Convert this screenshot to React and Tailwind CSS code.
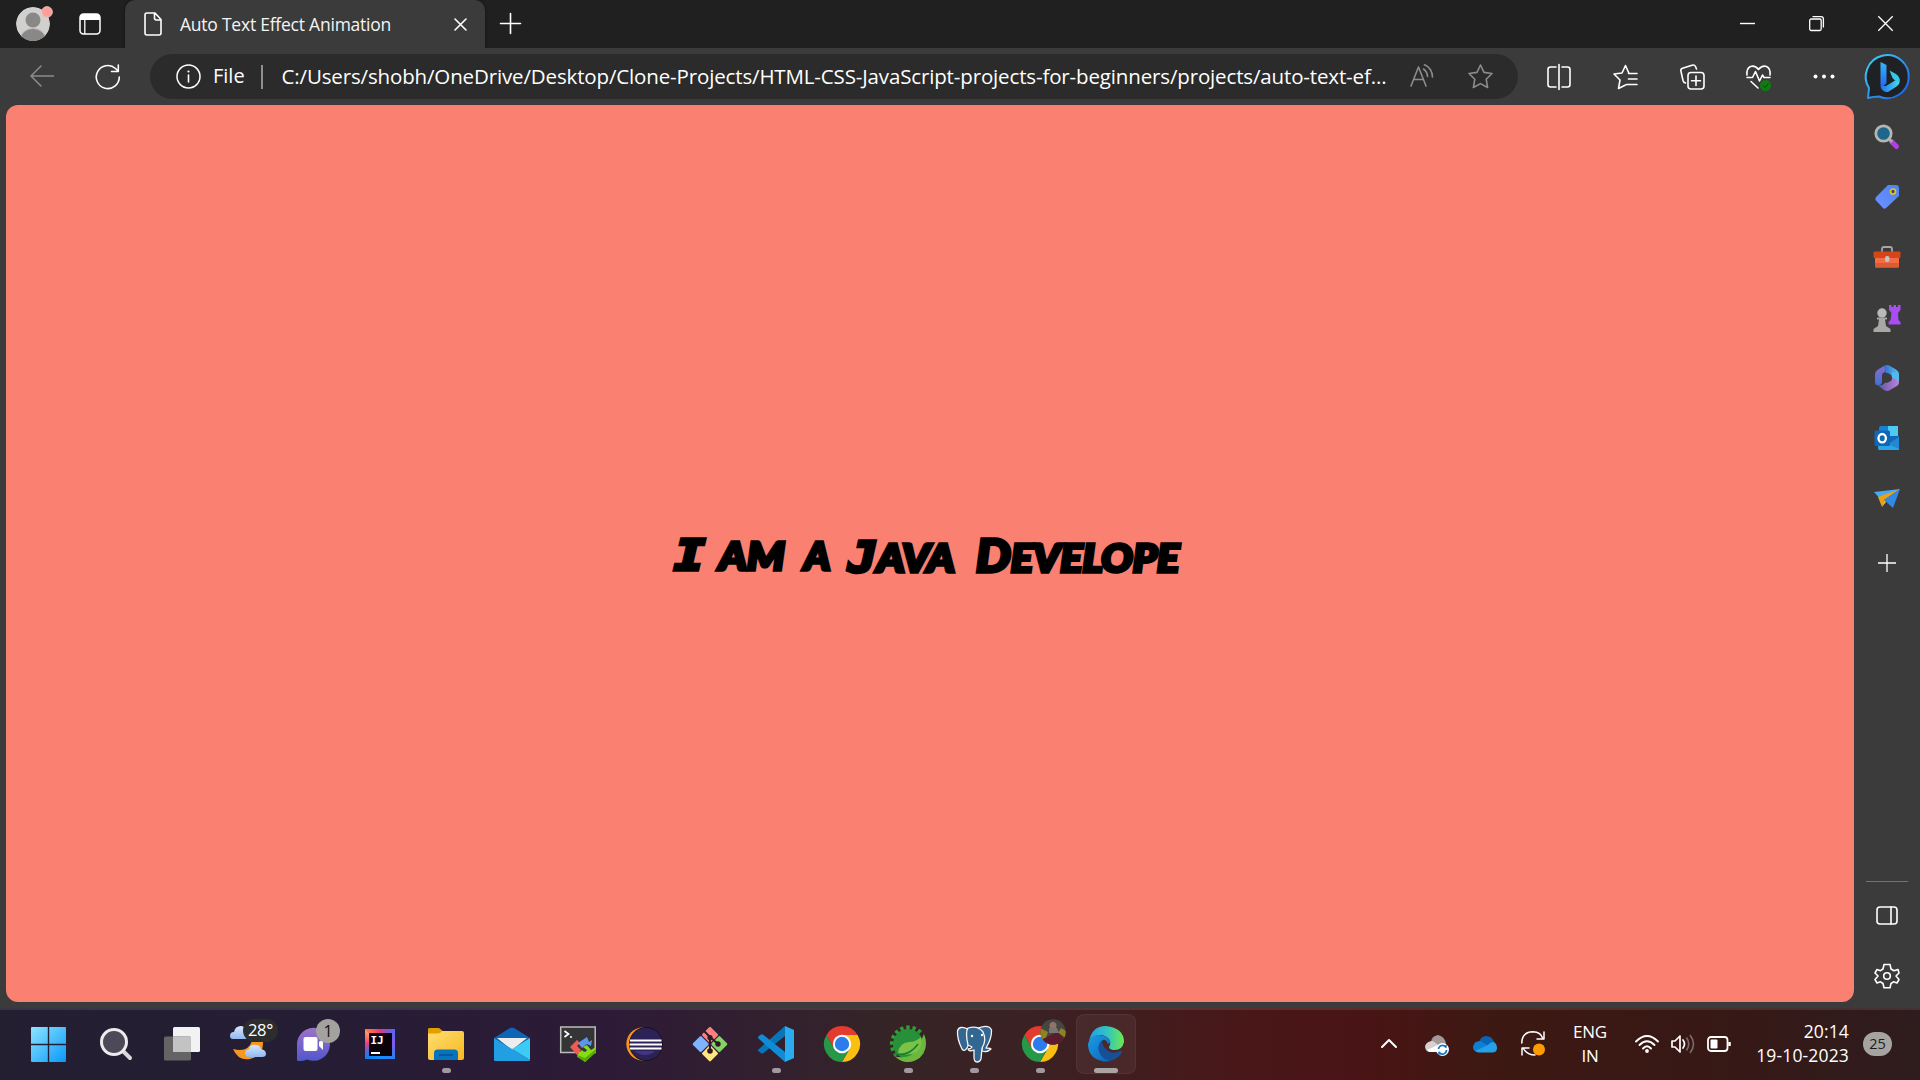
import React from "react";

function Icon({ w = 36, h = w, box, className = "", children }) {
  return (
    <svg width={w} height={h} viewBox={box || `0 0 ${w} ${h}`} fill="none" className={`block shrink-0 overflow-visible ${className}`}>
      {children}
    </svg>
  );
}

const line = { stroke: "#fff", strokeWidth: 1.6, strokeLinecap: "round", strokeLinejoin: "round", fill: "none" };
const grey = { ...line, stroke: "#8c8c8c" };

function TitleBar() {
  return (
    <header className="flex h-12 shrink-0 bg-[#202020]">
      <div className="relative ml-4 mt-[7px] h-[34px] w-[34px]">
        <Icon w={34}>
          <defs><clipPath id="av"><circle cx="17" cy="17" r="17" /></clipPath></defs>
          <g clipPath="url(#av)">
            <circle cx="17" cy="17" r="17" fill="#d2d0ce" />
            <circle cx="17" cy="13" r="7.5" fill="#8a8886" />
            <ellipse cx="17" cy="32" rx="12.5" ry="10.5" fill="#8a8886" stroke="#bdbbb8" />
          </g>
          <circle cx="31" cy="5" r="5.4" fill="#ff9f97" stroke="#e9c9c6" strokeWidth=".8" />
        </Icon>
      </div>
      <Icon w={22} h={22} className="ml-[29px] mt-[13px]">
        <rect x="1" y="1" width="20" height="20" rx="3.5" stroke="#fff" strokeWidth="1.5" />
        <path d="M1 7V4.5Q1 1 4.5 1H17.5Q21 1 21 4.5V7Z" fill="#fff" />
        <path d="M5.8 7V21" stroke="#fff" strokeWidth="1.3" />
      </Icon>
      <div className="ml-[23.5px] flex w-[360px] items-center rounded-t-[10px] bg-[#3b3b3b] shadow-[0_0_3px_#111] [clip-path:inset(0_-4px_0_-4px)]">
        <Icon w={18} h={24} className="ml-[19.5px]">
          <path d="M3 1H11L17 7.5V21Q17 23 15 23H3Q1 23 1 21V3Q1 1 3 1ZM10.5 1V6Q10.5 8 12.5 8H17" {...line} />
        </Icon>
        <span className="-mt-px ml-[18px] w-[211px] whitespace-nowrap text-[17.5px] leading-6 tracking-[-0.23px] text-[#f4f4f4]">Auto Text Effect Animation</span>
        <Icon w={13} className="ml-[63px] mt-[1px]"><path d="M1 1L12 12M12 1L1 12" {...line} /></Icon>
      </div>
      <Icon w={21} className="ml-[15px] mt-[13px]"><path d="M10.5 .5V20.5M.5 10.5H20.5" {...line} /></Icon>
      <div className="ml-auto mr-[27px] flex gap-[54px] pt-4">
        <Icon w={15}><path d="M0 7.5H15" stroke="#fff" strokeWidth="1.4" /></Icon>
        <Icon w={15}>
          <rect x=".7" y="3" width="11.5" height="11.5" rx="1.5" stroke="#fff" strokeWidth="1.3" />
          <path d="M3.5 .7H12Q14.4 .7 14.4 3V11.5" stroke="#fff" strokeWidth="1.3" />
        </Icon>
        <Icon w={15}><path d="M.3 .3L14.7 14.7M14.7 .3L.3 14.7" stroke="#fff" strokeWidth="1.3" /></Icon>
      </div>
    </header>
  );
}

function Toolbar() {
  return (
    <div className="flex h-[57px] shrink-0 items-center bg-[#3b3b3b]">
      <Icon w={24} h={22} className="-mt-px ml-[30px]"><path d="M23.5 11H1M11 1L1 11L11 21" {...grey} strokeWidth="1.5" /></Icon>
      <Icon w={26} h={26} className="ml-[41px]">
        <path d="M24.3 13A11.5 11.5 0 1 1 20.5 4.5L23 7M23.3 1V7.5H16.5" {...line} />
      </Icon>
      <div className="ml-[29px] flex h-[45px] w-[1368px] items-center rounded-full bg-[#2b2b2b]">
        <Icon w={25} className="ml-[26px]">
          <circle cx="12.5" cy="12.5" r="11.5" {...line} strokeWidth="1.5" />
          <path d="M12.5 11V18" {...line} /><circle cx="12.5" cy="7.5" r="1.1" fill="#fff" />
        </Icon>
        <span className="-mt-px ml-[12px] w-[32px] whitespace-nowrap text-[20px] leading-7 text-white">File</span>
        <div className="ml-[16px] h-6 w-[1.5px] bg-[#8f8f8f]" />
        <span className="-mt-[2px] ml-[19px] w-[1110px] whitespace-nowrap text-[20.5px] leading-7 tracking-[-0.143px] text-white">
          C:/Users/shobh/OneDrive/Desktop/Clone-Projects/HTML-CSS-JavaScript-projects-for-beginners/projects/auto-text-ef...
        </span>
        <Icon w={24} h={24} className="-mt-px ml-[18px]">
          <path d="M1 22L8.5 3L16 22M3.5 15.5H13.5M13.5 5Q17.5 8 17.5 12.5M14.5 .8Q22 4 22.5 13" {...grey} />
        </Icon>
        <Icon w={25} h={25} className="ml-[34px]">
          <path d="M12.5 1L16 8.4L24 9.5L18.2 15.2L19.6 23.5L12.5 19.6L5.4 23.5L6.8 15.2L1 9.5L9 8.4Z" {...grey} />
        </Icon>
      </div>
      <Icon w={24} h={26} className="ml-[29px]">
        <path d="M9 3H3.5Q1 3 1 5.5V20.5Q1 23 3.5 23H9M15 3H20.5Q23 3 23 5.5V20.5Q23 23 20.5 23H15M12 .5V25.5" {...line} />
      </Icon>
      <Icon w={25} h={26} className="ml-[42px]">
        <path d="M16 9.5L12.5 1.5L9 9L1 10L7 16L5.5 24.5L12.5 21M15.5 9.5H24M15.5 15H24M13.5 20.5H24" {...line} />
      </Icon>
      <Icon w={25} h={26} className="ml-[41.5px]">
        <rect x="8" y="8.5" width="16" height="16.5" rx="3" {...line} />
        <path d="M16 12V21.5M11.5 16.7H20.5M5.500 19Q3.500 18.500 3 16.500L.9 7Q.4 5 2.500 4.300L12 1.200Q14.500 .5 15.500 2.500L16.500 5" {...line} />
      </Icon>
      <Icon w={25} h={26} className="ml-[41px]">
        <path d="M1 11Q0 5 4.5 2.5Q9 1 12.5 5.5Q16 1 20.5 2.5Q25 5 24 11M1 13.5H6.5L9.5 7.5L13.5 17L16.5 11L18 13.5H24M5 17.5L12 24" {...line} />
        <circle cx="19.5" cy="21.5" r="5.5" fill="#107c10" /><path d="M17 21.5L19 23.5L22.5 19.5" stroke="#0a3e0a" />
      </Icon>
      <Icon w={22} h={5} className="ml-[42px]"><circle cx="2.5" cy="2.5" r="2" fill="#fff" /><circle cx="11" cy="2.5" r="2" fill="#fff" /><circle cx="19.5" cy="2.5" r="2" fill="#fff" /></Icon>
      <Icon w={45} h={46} className="ml-[31.5px]">
        <defs>
          <linearGradient id="bring" x1="0" y1="0" x2="1" y2="1"><stop stopColor="#38d5ef" /><stop offset=".35" stopColor="#35aaf2" /><stop offset="1" stopColor="#175bdc" /></linearGradient>
          <linearGradient id="bb" x2="0" y2="1"><stop stopColor="#32b8f5" /><stop offset="1" stopColor="#2561ef" /></linearGradient>
          <linearGradient id="bc"><stop stopColor="#2272ee" /><stop offset="1" stopColor="#42dfee" /></linearGradient>
        </defs>
        <path d="M2 44L3 34A21.5 21.5 0 1 1 13 42.5Q8 42.5 2 44Z" fill="#202124" stroke="url(#bring)" strokeWidth="2" strokeLinejoin="round" />
        <path d="M14.500 8L20.500 11V29L15 34.500Q14.500 32 14.500 30Z" fill="url(#bb)" />
        <path d="M23.500 16.500L30 20Q35.500 24 33 30L29 26.500L26.500 24Z" fill="#31cae8" />
        <path d="M15 32L20 32L29 26.500L33.500 28Q33 31 29 33.500L22 38Q17 38.500 15 34Z" fill="url(#bc)" />
      </Icon>
    </div>
  );
}

const sideIcons = [
  <Icon w={26}>
    <path d="M17.5 17.5L22.500 22.500" stroke="#b43de8" strokeWidth="5" strokeLinecap="round" />
    <path d="M15 15L18 18" stroke="#aaa" strokeWidth="3" />
    <circle cx="9.5" cy="9.5" r="7.7" fill="#20658a" stroke="#b5b5b2" strokeWidth="2.8" />
  </Icon>,
  <Icon w={26}>
    <defs><linearGradient id="tag" x1="1" x2="0" y2="1"><stop stopColor="#4c83f5" /><stop offset="1" stopColor="#6f92ff" /></linearGradient></defs>
    <path d="M14 1H22Q25 1 25 4V12L12 24Q10.5 25.5 9 24L2 16.5Q.5 15 2 13Z" fill="url(#tag)" />
    <circle cx="19" cy="7.5" r="2.5" fill="#3a4770" stroke="#eac514" strokeWidth="1.7" />
  </Icon>,
  <Icon w={28} h={22}>
    <path d="M9 6V3Q9 1 11 1H17Q19 1 19 3V6" stroke="#a6a6a6" strokeWidth="1.8" />
    <rect x="2" y="8" width="24" height="13.5" rx="1.5" fill="#f26c46" /><path d="M2 17H26V20Q26 21.5 24.5 21.5H3.5Q2 21.5 2 20Z" fill="#df5a31" />
    <rect x=".5" y="5.500" width="27" height="6.500" rx="1" fill="#d44518" /><rect x="12" y="10" width="4.5" height="6" rx="2" fill="#c3c3c3" />
  </Icon>,
  <Icon w={28} h={28}>
    <path d="M16 1H18.500V3H20.500V1H23V3H25V1H27.500V6L25 9L25.500 16L27.500 18V20.500H15.500V18L17.500 16L18.500 9L16 6Z" fill="#a84df0" />
    <circle cx="9" cy="9" r="4.7" fill="#b9b9b7" /><path d="M4 13.5H14V15.5H12L13 22L17.5 25V28H.5V25L5 22L6 15.5H4Z" fill="#a8a8a6" />
  </Icon>,
  <Icon w={26}>
    <defs>
      <linearGradient id="ma" x2="1"><stop stopColor="#3266ce" /><stop offset="1" stopColor="#55c6f0" /></linearGradient>
      <linearGradient id="mb" x2="0" y2="1"><stop stopColor="#8b6ad0" /><stop offset="1" stopColor="#3e72d5" /></linearGradient>
      <linearGradient id="mc" x2="1"><stop stopColor="#5c55a2" /><stop offset="1" stopColor="#bd82df" /></linearGradient>
    </defs>
    <path d="M10 1Q13-.8 16 1L22 4.5Q25 6.5 25 9.5V16L18 13Q17 8 12 8L9 3Z" fill="url(#ma)" />
    <path d="M10 1L4 4.5Q1 6.5 1 9.500V17Q1 20 4 20.500Q8 20 8 16V10Q8 8 11 7Z" fill="url(#mb)" />
    <path d="M25 14V17Q25 20 22 21.5L16 25Q13 27 10 25L4 20.5Q8 21 11 18L18 14V9Z" fill="url(#mc)" />
    <path d="M25 9V16L18 12.500V7Z" fill="#51b9ec" />
    <path d="M13 8L17.500 10.500V15.500L13 18L8.500 15.500V10.500Z" fill="#3b3b3b" />
  </Icon>,
  <Icon w={26} h={26}>
    <rect x="5" y="1" width="19" height="21" rx="2" fill="#1683ce" /><path d="M14 1H24V11H14Z" fill="#4ccaf1" /><path d="M14 11H25V22H14Z" fill="#1268b7" />
    <path d="M4 12L25 23V25H5Q4 25 4 23Z" fill="#2aa5e7" /><path d="M25 12L14 19L25 24Z" fill="#2387d2" />
    <rect x=".5" y="5.5" width="15.5" height="15.5" rx="1.5" fill="#0f67b7" /><ellipse cx="8.2" cy="13.2" rx="3.7" ry="4.2" stroke="#fff" strokeWidth="2.3" />
  </Icon>,
  <Icon w={26} h={19}>
    <path d="M0 3L26 0L8 12Z" fill="#4aa8eb" /><path d="M26 0L4 8L8 18L10 11Z" fill="#e9a414" /><path d="M26 0L10 11L19 19Z" fill="#3288e5" /><path d="M10 11L8 18L12 13Z" fill="#f6bf32" />
  </Icon>,
];

function Sidebar() {
  return (
    <aside className="flex w-[66px] shrink-0 flex-col items-center bg-[#3b3b3b] pt-[2px] pr-px">
      {sideIcons.map((icon, i) => (
        <div key={i} className="flex h-[60.2px] w-full shrink-0 items-center justify-center">{icon}</div>
      ))}
      <div className="flex h-[70px] shrink-0 items-center"><Icon w={18}><path d="M9 0V18M0 9H18" stroke="#fff" strokeWidth="1.3" /></Icon></div>
      <div className="mt-auto h-px w-[42px] shrink-0 bg-[#737373]" />
      <div className="flex h-[66px] shrink-0 items-center">
        <Icon w={22} h={19}><rect x="1" y="1" width="20" height="17" rx="3" {...line} /><path d="M15 1V18" {...line} /></Icon>
      </div>
      <div className="mb-[5px] flex h-[55px] shrink-0 items-center">
        <Icon w={26} h={26}>
          <path d="M10 1.5H16L17 6L20 7.7L24 6.5L25 10L22 13L25 16.5L23 20L19.5 18.8L17 20.5L16 24.7H10L9 20.5L6.5 18.8L3 20L1 16.5L4 13L1 10L3 6.5L6.5 7.7L9 6Z" {...line} />
          <circle cx="13" cy="13" r="3.3" {...line} />
        </Icon>
      </div>
    </aside>
  );
}

function Chrome() {
  return (
    <Icon w={36} box="0 0 36 36">
      <path d="M2.4 9A18 18 0 0 1 33.6 9H18L10.2 22.5Z" fill="#e33b2e" />
      <path d="M33.6 9A18 18 0 0 1 18 36L25.8 22.5L18 9Z" fill="#fbbf12" />
      <path d="M18 36A18 18 0 0 1 2.4 9L10.2 22.5H25.8Z" fill="#269848" />
      <circle cx="18" cy="18" r="9.2" fill="#fff" /><circle cx="18" cy="18" r="7.2" fill="#2d7cec" />
    </Icon>
  );
}

const apps = [
  { icon: (
    <Icon w={35}>
      <defs><linearGradient id="win" x1="0" y1="0" x2="35" y2="35" gradientUnits="userSpaceOnUse"><stop stopColor="#8de5ff" /><stop offset="1" stopColor="#0a98fa" /></linearGradient></defs>
      <path d="M0 1Q0 0 1 0H16.8V16.8H0ZM18.2 0H34Q35 0 35 1V16.8H18.2ZM0 18.2H16.8V35H1Q0 35 0 34ZM18.2 18.2H35V34Q35 35 34 35H18.2Z" fill="url(#win)" />
    </Icon>) },
  { icon: (
    <Icon w={34}>
      <path d="M25 25L31 31" stroke="#d8d8dc" strokeWidth="4" strokeLinecap="round" /><circle cx="15" cy="15" r="12.5" fill="#4e4858" stroke="#ececee" strokeWidth="3" />
    </Icon>) },
  { icon: (
    <Icon w={36} h={34}>
      <rect x="9" y="0" width="27" height="25" rx="1.5" fill="#f2f2f2" /><rect x="0" y="9.5" width="27" height="24" rx="1.5" fill="#666365" /><path d="M9 9.5H27V25H9Z" fill="#c4c3c4" />
    </Icon>) },
  { icon: (
    <div className="relative h-[36px] w-9">
      <Icon w={36}>
        <defs><linearGradient id="cl" x2="0" y2="1"><stop stopColor="#d8e7ff" /><stop offset="1" stopColor="#91b8f0" /></linearGradient></defs>
        <path d="M3 13Q0 13 0 10Q0 6 4 6Q5 0 11 0Q16 0 17 6L20 13Z" fill="url(#cl)" />
        <path d="M3 23Q18 27 22 15H33Q34 30 20 33Q8 35 3 23Z" fill="#f5981e" />
        <path d="M19 31Q15 31 15 27Q15 24 19 23Q20 18 26 19Q30 19 31 23Q36 24 36 28Q36 31 32 31Z" fill="url(#cl)" />
      </Icon>
      <span className="absolute left-[13px] top-[-7.5px] flex h-[23px] w-[35px] items-center justify-center rounded-full bg-[#2d2d2d] text-[16.5px] tracking-[-0.3px] text-white">28°</span>
    </div>) },
  { icon: (
    <div className="relative h-9 w-9">
      <Icon w={36}>
        <defs><linearGradient id="chat" x2="0" y2="1"><stop stopColor="#9e72c7" /><stop offset="1" stopColor="#5257ce" /></linearGradient></defs>
        <path d="M1 34.5V18A16.5 16.5 0 1 1 11 33.5Q5 36 1 34.5Z" fill="url(#chat)" />
        <rect x="7.5" y="11" width="14" height="14" rx="2" fill="#fff" /><path d="M23 16L27 13V24L23 20Z" fill="#fff" />
      </Icon>
      <span className="absolute left-[20px] top-[-7px] flex h-6 w-6 items-center justify-center rounded-full bg-[#a3a29e] text-[16px] text-[#111]">1</span>
    </div>) },
  { icon: (
    <div className="flex h-[30px] w-[30px] items-center justify-center bg-[conic-gradient(from_315deg,#ff764e,#ee3378_12%,#5965ef_25%,#8458ef_38%,#2e7cf2_50%,#148cf7_62%,#147cf0_75%,#ef398b_88%,#ff9f5c)]">
      <div className="flex h-[23px] w-[23px] flex-col bg-[#0b0209] pl-[2px] pt-[2px]">
        <span className="font-[DejaVu_Sans_Mono,monospace] text-[11px] font-bold leading-[12px] text-white">IJ</span>
        <div className="mt-[5px] h-[2px] w-[9px] bg-white" />
      </div>
    </div>) },
  { dot: 1, icon: (
    <Icon w={36} h={34}>
      <defs><linearGradient id="fol" x2="1" y2="1"><stop stopColor="#ffdd73" /><stop offset="1" stopColor="#f8b91c" /></linearGradient></defs>
      <path d="M0 2Q0 1 2 1H11L16 5V9H0Z" fill="#e2a000" /><path d="M0 6.5H10Q13 6 14 4H34Q36 4 36 6V31Q36 33 34 33H2Q0 33 0 31Z" fill="url(#fol)" />
      <path d="M6 33V26Q6 22.5 9.5 22.5H26.5Q30 22.5 30 26V33Z" fill="#0873bd" /><path d="M11 28H25" stroke="#07528e" strokeWidth="1.5" />
    </Icon>) },
  { icon: (
    <Icon w={36} h={34}>
      <path d="M0 11L16 1Q18 0 20 1L36 11L18 22Z" fill="#0d66b5" /><path d="M3 11H33L18 23Z" fill="#ededed" /><path d="M0 11L18 22L36 33Q36 34 35 34H1Q0 34 0 33Z" fill="#229fe3" /><path d="M36 11L18 22L36 33Z" fill="#3bcbf5" />
    </Icon>) },
  { icon: (
    <Icon w={36}>
      <rect x=".7" y="1" width="34.5" height="25.5" fill="#343537" stroke="#bcbcb8" strokeWidth="1.5" /><path d="M4.5 5L8.5 8L4.5 11M10 11H12" stroke="#fff" strokeWidth="1.7" />
      <path d="M10 21L17 14L20 17L17 20L21 24L17 29Z" fill="#ef5a55" /><path d="M18 17L27 11L29 16L32 14L31 20L27 18L22 22Z" fill="#5b96ef" />
      <path d="M36 21V26L25 36L17 29L22 24L25 27L27 24L23 21L27 19L31 24Z" fill="#86df0c" /><path d="M17 29V31L25 36L36 26V23L25 32Z" fill="#5aaa00" />
    </Icon>) },
  { icon: (
    <Icon w={36}>
      <circle cx="16.8" cy="18" r="16.5" fill="#f7941e" /><circle cx="20" cy="18" r="16.5" fill="#2c2255" stroke="#15131f" />
      <path d="M9 25A12 9 0 0 0 29 25Z" fill="#443483" /><path d="M4 14.5H35.5M3.5 18.5H36M4 22.5H35.5" stroke="#fff" strokeWidth="2" />
    </Icon>) },
  { icon: (
    <Icon w={36}>
      <g transform="rotate(45 18 18)"><rect x="5.5" y="5.5" width="12" height="12" rx="1.2" fill="#ff8080" /><rect x="18.7" y="5.5" width="12" height="12" rx="1.2" fill="#84d466" /><rect x="5.5" y="18.7" width="12" height="12" rx="1.2" fill="#80b3ff" /><rect x="18.7" y="18.7" width="12" height="12" rx="1.2" fill="#ffe680" /></g>
      <path d="M12 5L18 11V25M18 11L26 18" stroke="#2d1b29" strokeWidth="2" /><circle cx="18" cy="11.5" r="2.6" fill="#2d1b29" /><circle cx="18" cy="25" r="2.8" fill="#2d1b29" /><circle cx="26" cy="18" r="2.7" fill="#2d1b29" />
    </Icon>) },
  { dot: 1, icon: (
    <Icon w={36}>
      <path d="M27 0L36 4V32L27 36Z" fill="#2bacf1" />
      <path d="M1 23L27 0V10L5.5 27Q4 28 3 27L1 25.5Q-1 24 1 23Z" fill="#0875b8" />
      <path d="M1 13Q-1 11 1 10L3 8.5Q4 8 5.5 9L27 26V36Z" fill="#108bd7" />
    </Icon>) },
  { icon: <Chrome /> },
  { dot: 1, icon: (
    <Icon w={36}>
      <path d="M30.500 6.500A16.300 16.300 0 1 0 6.500 29.500" stroke="#319d39" strokeWidth="4" strokeDasharray="3.3 2.8" />
      <circle cx="18" cy="18" r="15" fill="#27913a" />
      <path d="M36 17A18 18 0 0 1 5 30.5Q15 33 23 28Q30 25 31 15L34 8Q36 13 36 17Z" fill="#6cb83f" />
      <path d="M8 27Q9 17 19 16Q26 16 31 11Q33 20 28 25Q21 31 8 27Z" fill="#7bc247" /><path d="M4 28Q19 31 28 18" stroke="#167e30" strokeWidth="1.5" />
    </Icon>) },
  { dot: 1, icon: (
    <Icon w={36} h={37}>
      <g fill="#336791" stroke="#f4f4f4" strokeWidth="1.3" strokeLinejoin="round">
        <path d="M22 2Q33-2 35.5 4Q36 12 30 22Q35 22 35 23Q31 27 26 25V8Z" />
        <path d="M12 3Q3-1 1.5 5Q1 13 6 23Q9 27 12 20L15 7Z" />
        <path d="M12 2Q22-1 27 6Q31 14 26 22L25 33Q24 36 21 36Q18 36 18 31V24Q13 26 12 23Q15 23 16 21L12 19Q9 6 12 2Z" />
      </g>
      <circle cx="16" cy="10" r="1.2" fill="#fff" /><circle cx="26" cy="9" r="1.2" fill="#fff" />
    </Icon>) },
  { dot: 1, icon: (
    <div className="relative">
      <Chrome />
      <span className="absolute left-[18px] top-[-7px] h-[26px] w-[26px]">
        <Icon w={26}>
          <defs><clipPath id="ph"><circle cx="13" cy="13" r="12.7" /></clipPath></defs>
          <g clipPath="url(#ph)"><path d="M0 0H26V26H0Z" fill="#464641" /><path d="M0 9L8 13L5 22H0ZM21 9L26 12V19L18 14Z" fill="#8f8222" /><path d="M3 20L13 15L18 13L26 22L16 26H2Z" fill="#5c1c2e" /><circle cx="13" cy="6.5" r="3.500" fill="#937268" /><path d="M9 9H17L19 14H9Z" fill="#767775" /></g>
        </Icon>
      </span>
    </div>) },
  { active: 1, icon: (
    <Icon w={36}>
      <defs>
        <linearGradient id="e1" x2="1"><stop stopColor="#299ee2" /><stop offset=".5" stopColor="#2fc2c8" /><stop offset="1" stopColor="#6be94c" /></linearGradient>
        <linearGradient id="e2" x2="1" y2="1"><stop stopColor="#1a9de5" /><stop offset="1" stopColor="#0c60b8" /></linearGradient>
      </defs>
      <path d="M1 15Q4 0 18 0Q36 2 36 16Q34 25 25 24Q19 23 22 19Q24 12 14 9Q5 8 1 15Z" fill="url(#e1)" />
      <path d="M0 18Q2 9 11 9Q22 10 22 17L20 18Q18 13 15 14Q10 18 13 26Q17 33 26 31Q22 37 14 35Q0 32 0 18Z" fill="url(#e2)" />
      <path d="M14 14Q8 20 12 28Q17 36 25 34Q31 32 34 26Q34 24 32 25Q24 29 19 24Q14 20 14 14Z" fill="#174f98" />
    </Icon>) },
];

function Taskbar() {
  return (
    <footer className="flex h-[72px] shrink-0 items-center border-t-2 border-white/10 bg-[linear-gradient(90deg,#231f31_0%,#261d35_18%,#2d1a37_31%,#32202f_40%,#352427_46%,#3b2123_54%,#491718_65%,#491415_71%,#3e1813_77%,#371815_89%,#2e1c1e_100%)] pl-[15px]">
      {apps.map((a, i) => (
        <div key={i} className="flex h-full w-[66px] shrink-0 items-center justify-center pb-[2px] first:mr-[2px]">
          <div className={a.active ? "relative flex h-[60px] w-[60px] items-center justify-center rounded-lg border border-white/5 bg-white/5" : "relative flex h-[60px] w-[60px] items-center justify-center"}>
            {a.icon}
            {a.dot && <span className="absolute left-[25.5px] top-[54px] h-[5px] w-[9px] rounded-full bg-[#a09aa0]" />}
            {a.active && <span className="absolute left-[17px] top-[53px] h-[5px] w-6 rounded-full bg-[#aaa5a3]" />}
          </div>
        </div>
      ))}
      <div className="flex h-full items-center pb-[3px]">
        <Icon w={16} h={9} className="ml-[242px]"><path d="M1 8L8 1L15 8" {...line} strokeWidth="2" /></Icon>
        <Icon w={24} h={20} className="ml-[28px] mt-[3px]">
          <path d="M6 8Q6 1 13 0Q19 1 21 8L14 17Z" fill="#a39998" /><path d="M0 11Q2 6 8 6L16 12L13 17H4Q0 16 0 11Z" fill="#d7d0cf" /><path d="M2 15L13 10L18 17H5Z" fill="#fff" />
          <circle cx="17.5" cy="14.5" r="6.5" fill="#fff" /><path d="M13.5 14A4 4 0 0 1 21 12.5V10M21.5 15A4 4 0 0 1 14 17V19.5" stroke="#1673c4" strokeWidth="1.6" />
        </Icon>
        <Icon w={24} h={17} className="ml-[24px] mt-px"><path d="M6 6Q8 0 13 0Q19 0 21 6L12 15Z" fill="#0864b6" /><path d="M0 11Q1 5 7 5L16 10L12 16H4Q0 15 0 11Z" fill="#0c80d3" /><path d="M2 15L15 9Q17 6 21 6Q24 8 24 12Q24 16 20 16.5H5Z" fill="#26a0e6" /></Icon>
        <Icon w={24} h={25} className="ml-[24px]">
          <path d="M.8 12Q1 1 12 .8Q20 1 22 8M23 1V8H16M14 24Q6 24 2 17M1 24V17H8" {...line} strokeWidth="1.5" /><circle cx="18" cy="18.5" r="6" fill="#ff9b00" />
        </Icon>
        <div className="ml-[23px] w-[44px] text-center text-[17px] leading-[23.5px] tracking-[-0.2px] text-white"><div>ENG</div><div>IN</div></div>
        <Icon w={24} h={18} className="ml-[23px]"><path d="M1 6.5Q12-4.5 23 6.5M4.5 10Q12 2.5 19.5 10M8 13.5Q12 9 16 13.5" {...line} strokeWidth="1.9" /><circle cx="12" cy="16" r="1.9" fill="#fff" /></Icon>
        <Icon w={24} h={20} className="ml-[12px]"><path d="M1 7H4L9 2V18L4 13H1Z" {...line} strokeWidth="1.7" /><path d="M12 6Q15 10 12 14" {...line} strokeWidth="1.7" /><path d="M15.5 3.5Q20 10 15.5 16.5M19 1Q26 10 19 19" stroke="#80696a" strokeWidth="1.6" /></Icon>
        <Icon w={24} h={16} className="ml-[12px]"><rect x="1" y="1" width="19.5" height="14" rx="3" {...line} strokeWidth="1.8" /><rect x="3.5" y="3.5" width="7" height="9" rx="1" fill="#fff" /><path d="M22.5 6V10" stroke="#fff" strokeWidth="2.5" /></Icon>
        <div className="ml-[19px] w-[99px] whitespace-nowrap text-right text-[17.5px] leading-[23.5px] tracking-[0.15px] text-white"><div>20:14</div><div>19-10-2023</div></div>
        <div className="ml-[14px] flex h-[24px] w-[29px] items-center justify-center rounded-full bg-[#a6a4a0] text-[14.5px] text-[#1d1b1a]">25</div>
      </div>
    </footer>
  );
}

function Heading() {
  return (
    <h1 className="flex h-[50px] w-[512px] items-center whitespace-nowrap pt-[3px] font-[Lato,sans-serif] text-[47px] font-black italic leading-[50px] text-black [-webkit-text-stroke:3.5px_black] [stroke-linejoin:round]">
      <span className="w-[45px] origin-left scale-x-120 font-[DejaVu_Sans_Mono,monospace] text-[43px]">I </span>
      <span className="w-[85px] origin-left scale-x-112 text-[38px] uppercase">am </span>
      <span className="w-[44px] origin-left scale-x-105 text-[38px] uppercase">a </span>
      <span className="w-[128px] origin-left scale-x-111"><span className="font-[DejaVu_Sans_Mono,monospace] text-[43px]">J</span><span className="text-[38px] uppercase">ava </span></span>
      <span className="origin-left scale-x-109"><span className="text-[45px]">D</span><span className="text-[38px] uppercase">evelope</span></span>
    </h1>
  );
}

export default function App() {
  return (
    <div className="flex h-[1080px] w-[1920px] flex-col overflow-hidden bg-[#3b3b3b] font-['Open_Sans','Noto_Sans',sans-serif]">
      <TitleBar />
      <Toolbar />
      <div className="flex h-[903px] shrink-0">
        <main className="ml-1.5 flex h-[897px] w-[1848px] items-center justify-center rounded-[12px] bg-[#fa8072]">
          <Heading />
        </main>
        <Sidebar />
      </div>
      <Taskbar />
    </div>
  );
}
